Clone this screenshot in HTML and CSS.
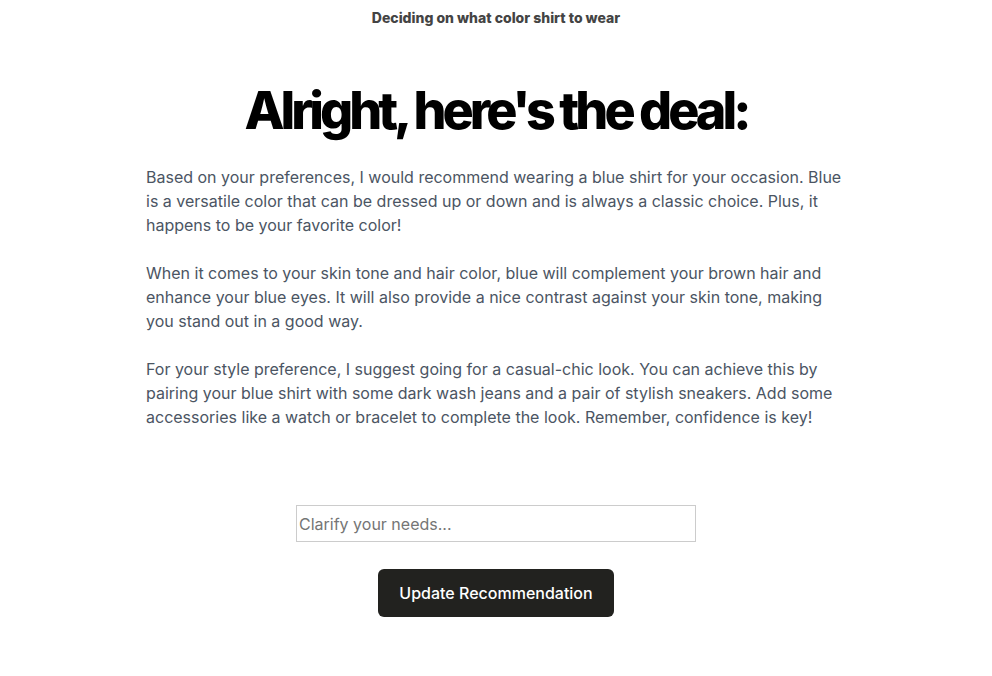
FILE: index.html
```html
<!DOCTYPE html>
<html>
<head>
<meta charset="utf-8">
<link rel="stylesheet" href="styles.css">
</head>
<body>
<header class="topbar">Deciding on what color shirt to wear</header>
<main class="content">
  <h1 class="title">Alright, here's the deal:</h1>
  <div class="answer">
    <p>Based on your preferences, I would recommend wearing a blue shirt for your occasion. Blue is a versatile color that can be dressed up or down and is always a classic choice. Plus, it happens to be your favorite color!</p>
    <p>When it comes to your skin tone and hair color, blue will complement your brown hair and enhance your blue eyes. It will also provide a nice contrast against your skin tone, making you stand out in a good way.</p>
    <p>For your style preference, I suggest going for a casual-chic look. You can achieve this by pairing your blue shirt with some dark wash jeans and a pair of stylish sneakers. Add some accessories like a watch or bracelet to complete the look. Remember, confidence is key!</p>
  </div>
  <form class="refine">
    <input class="refine-input" type="text" placeholder="Clarify your needs...">
    <button class="refine-btn" type="button">Update Recommendation</button>
  </form>
</main>
</body>
</html>
```
FILE: styles.css
```css
* { box-sizing: border-box; }
html, body { margin: 0; padding: 0; background: #fff; }
body { font-family: Inter, "Noto Sans", sans-serif; color: #111; }
.topbar {
  text-align: center;
  font-size: 14px;
  font-weight: 800;
  color: #444;
  padding-top: 9px;
  line-height: 17px;
}
.content {
  max-width: 700px;
  margin: 0 auto;
  display: flex;
  flex-direction: column;
}
.title {
  margin: 51px 0 0;
  text-align: center;
  font-size: 52px;
  font-weight: 800;
  letter-spacing: -0.077em;
  line-height: 68px;
  color: #000;
}
.answer { margin-top: 20px; }
.answer p {
  margin: 0 0 24px;
  font-size: 16px;
  line-height: 24px;
  color: #4b5563;
}
.refine {
  margin-top: 52px;
  display: flex;
  flex-direction: column;
  align-items: center;
  gap: 27px;
}
.refine-input {
  width: 400px;
  height: 37px;
  border: 1px solid #ccc;
  padding: 0 2px;
  font-family: Inter, sans-serif;
  font-size: 16px;
  color: #333;
  outline: none;
}
.refine-input::placeholder { color: #757575; }
.refine-btn {
  background: #22221f;
  color: #fff;
  border: 0;
  border-radius: 6px;
  height: 48px;
  padding: 0 21px;
  font-family: Inter, sans-serif;
  font-size: 16px;
  font-weight: 500;
}
```
